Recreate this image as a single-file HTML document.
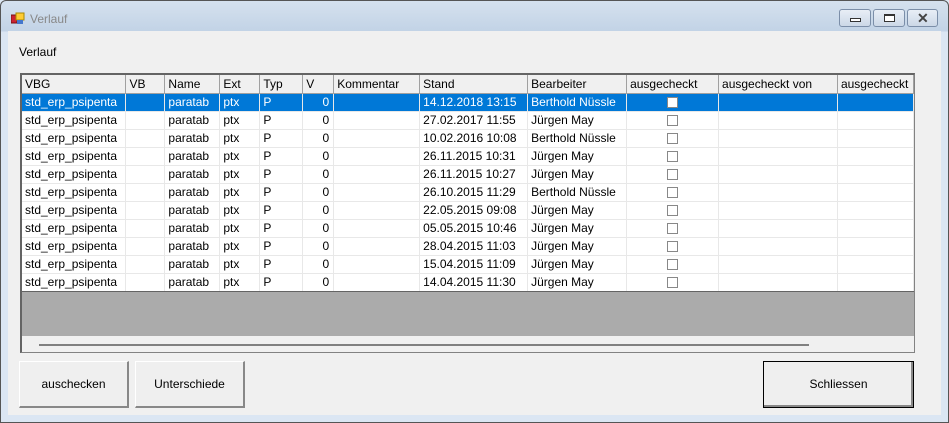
<!DOCTYPE html>
<html><head><style>
*{margin:0;padding:0;box-sizing:border-box}
body{width:949px;height:423px;overflow:hidden;font:12px "Liberation Sans",sans-serif;color:#000;position:relative;background:#dce7f3}
.win{position:absolute;left:0;top:0;width:949px;height:423px;border:1px solid #555;border-radius:6px 6px 0 0;background:linear-gradient(#d5e1ee,#c2d3e6 30px,#dbe6f3 31px)}
.client{position:absolute;left:8px;top:31px;width:933px;height:384px;background:#f0f0f0}
.tb{position:absolute;top:9px;width:32px;height:18px;border:1px solid #7b8ea8;border-radius:3px;background:linear-gradient(#e8eef6,#ccd8e7)}
.ab{position:absolute}
.grid{position:absolute;left:20px;top:73px;width:895px;height:280px;border:1px solid #828282;border-top:2px solid #646464;border-left:2px solid #646464;background:#f0f0f0;overflow:hidden}
table{border-collapse:collapse;table-layout:fixed;position:absolute;left:0;top:0}
td{height:18px;border-right:1px solid #e8e8e8;border-bottom:1px solid #e8e8e8;padding:0 0 0 3px;white-space:nowrap;overflow:hidden;background:#fff}
tr.h td{background:#f0f0f0;border-right:1px solid #a0a0a0;border-bottom:1px solid #a0a0a0}
tr.s td{background:#0078d7;color:#fff}
td.r{text-align:right;padding-right:4px}
td.c{text-align:center;padding:0}
.cb{display:inline-block;width:11px;height:11px;border:1px solid #888;background:#fff;vertical-align:middle}
.btn{position:absolute;top:361px;height:47px;background:#efefef;border:1px solid #fff;border-right:2px solid #888;border-bottom:2px solid #888;text-align:center;line-height:44px}
</style></head><body>
<div class="win"></div>
<svg class="ab" style="left:11px;top:12px" width="14" height="14"><rect x="0" y="3" width="6" height="8" fill="#c23" stroke="#711" stroke-width="1"/><rect x="5" y="1" width="8" height="7" fill="#fc3" stroke="#a80"/><rect x="6" y="8" width="6" height="4" fill="#47c"/></svg>
<div class="ab" style="left:30px;top:12px;color:#888">Verlauf</div>
<div class="tb" style="left:839px"><div class="ab" style="left:10px;top:8px;width:11px;height:4px;border:1px solid #333;background:#fff"></div></div>
<div class="tb" style="left:873px"><div class="ab" style="left:10px;top:4px;width:11px;height:8px;border:1px solid #333;border-top-width:2px;background:#fff"></div></div>
<div class="tb" style="left:907px;width:31px"><div class="ab" style="left:9px;top:0;font:bold 14px 'Liberation Sans';color:#444">✕</div></div>
<div class="client"></div>
<div class="ab" style="left:19px;top:45px">Verlauf</div>
<div class="grid">
<table>
<colgroup><col style="width:104px"><col style="width:39px"><col style="width:55px"><col style="width:40px"><col style="width:43px"><col style="width:31px"><col style="width:86px"><col style="width:108px"><col style="width:99px"><col style="width:92px"><col style="width:119px"><col style="width:76px"></colgroup>
<tr class="h"><td>VBG</td><td>VB</td><td>Name</td><td>Ext</td><td>Typ</td><td>V</td><td>Kommentar</td><td>Stand</td><td>Bearbeiter</td><td>ausgecheckt</td><td>ausgecheckt von</td><td>ausgecheckt</td></tr>
<tr class="s"><td>std_erp_psipenta</td><td></td><td>paratab</td><td>ptx</td><td>P</td><td class="r">0</td><td></td><td>14.12.2018 13:15</td><td>Berthold Nüssle</td><td class="c"><span class="cb"></span></td><td></td><td></td></tr>
<tr><td>std_erp_psipenta</td><td></td><td>paratab</td><td>ptx</td><td>P</td><td class="r">0</td><td></td><td>27.02.2017 11:55</td><td>Jürgen May</td><td class="c"><span class="cb"></span></td><td></td><td></td></tr>
<tr><td>std_erp_psipenta</td><td></td><td>paratab</td><td>ptx</td><td>P</td><td class="r">0</td><td></td><td>10.02.2016 10:08</td><td>Berthold Nüssle</td><td class="c"><span class="cb"></span></td><td></td><td></td></tr>
<tr><td>std_erp_psipenta</td><td></td><td>paratab</td><td>ptx</td><td>P</td><td class="r">0</td><td></td><td>26.11.2015 10:31</td><td>Jürgen May</td><td class="c"><span class="cb"></span></td><td></td><td></td></tr>
<tr><td>std_erp_psipenta</td><td></td><td>paratab</td><td>ptx</td><td>P</td><td class="r">0</td><td></td><td>26.11.2015 10:27</td><td>Jürgen May</td><td class="c"><span class="cb"></span></td><td></td><td></td></tr>
<tr><td>std_erp_psipenta</td><td></td><td>paratab</td><td>ptx</td><td>P</td><td class="r">0</td><td></td><td>26.10.2015 11:29</td><td>Berthold Nüssle</td><td class="c"><span class="cb"></span></td><td></td><td></td></tr>
<tr><td>std_erp_psipenta</td><td></td><td>paratab</td><td>ptx</td><td>P</td><td class="r">0</td><td></td><td>22.05.2015 09:08</td><td>Jürgen May</td><td class="c"><span class="cb"></span></td><td></td><td></td></tr>
<tr><td>std_erp_psipenta</td><td></td><td>paratab</td><td>ptx</td><td>P</td><td class="r">0</td><td></td><td>05.05.2015 10:46</td><td>Jürgen May</td><td class="c"><span class="cb"></span></td><td></td><td></td></tr>
<tr><td>std_erp_psipenta</td><td></td><td>paratab</td><td>ptx</td><td>P</td><td class="r">0</td><td></td><td>28.04.2015 11:03</td><td>Jürgen May</td><td class="c"><span class="cb"></span></td><td></td><td></td></tr>
<tr><td>std_erp_psipenta</td><td></td><td>paratab</td><td>ptx</td><td>P</td><td class="r">0</td><td></td><td>15.04.2015 11:09</td><td>Jürgen May</td><td class="c"><span class="cb"></span></td><td></td><td></td></tr>
<tr><td>std_erp_psipenta</td><td></td><td>paratab</td><td>ptx</td><td>P</td><td class="r">0</td><td></td><td>14.04.2015 11:30</td><td>Jürgen May</td><td class="c"><span class="cb"></span></td><td></td><td></td></tr>
</table>
<div class="ab" style="left:0;top:216px;width:893px;height:1px;background:#646464"></div>
<div class="ab" style="left:0;top:217px;width:893px;height:44px;background:#ababab"></div>
<div class="ab" style="left:17px;top:269px;width:770px;height:2px;background:#808080"></div>
</div>
<div class="btn" style="left:19px;width:110px">auschecken</div>
<div class="btn" style="left:135px;width:110px">Unterschiede</div>
<div class="btn" style="left:763px;width:151px;border:1px solid #000;box-shadow:inset -2px -2px 0 #888">Schliessen</div>
</body></html>
